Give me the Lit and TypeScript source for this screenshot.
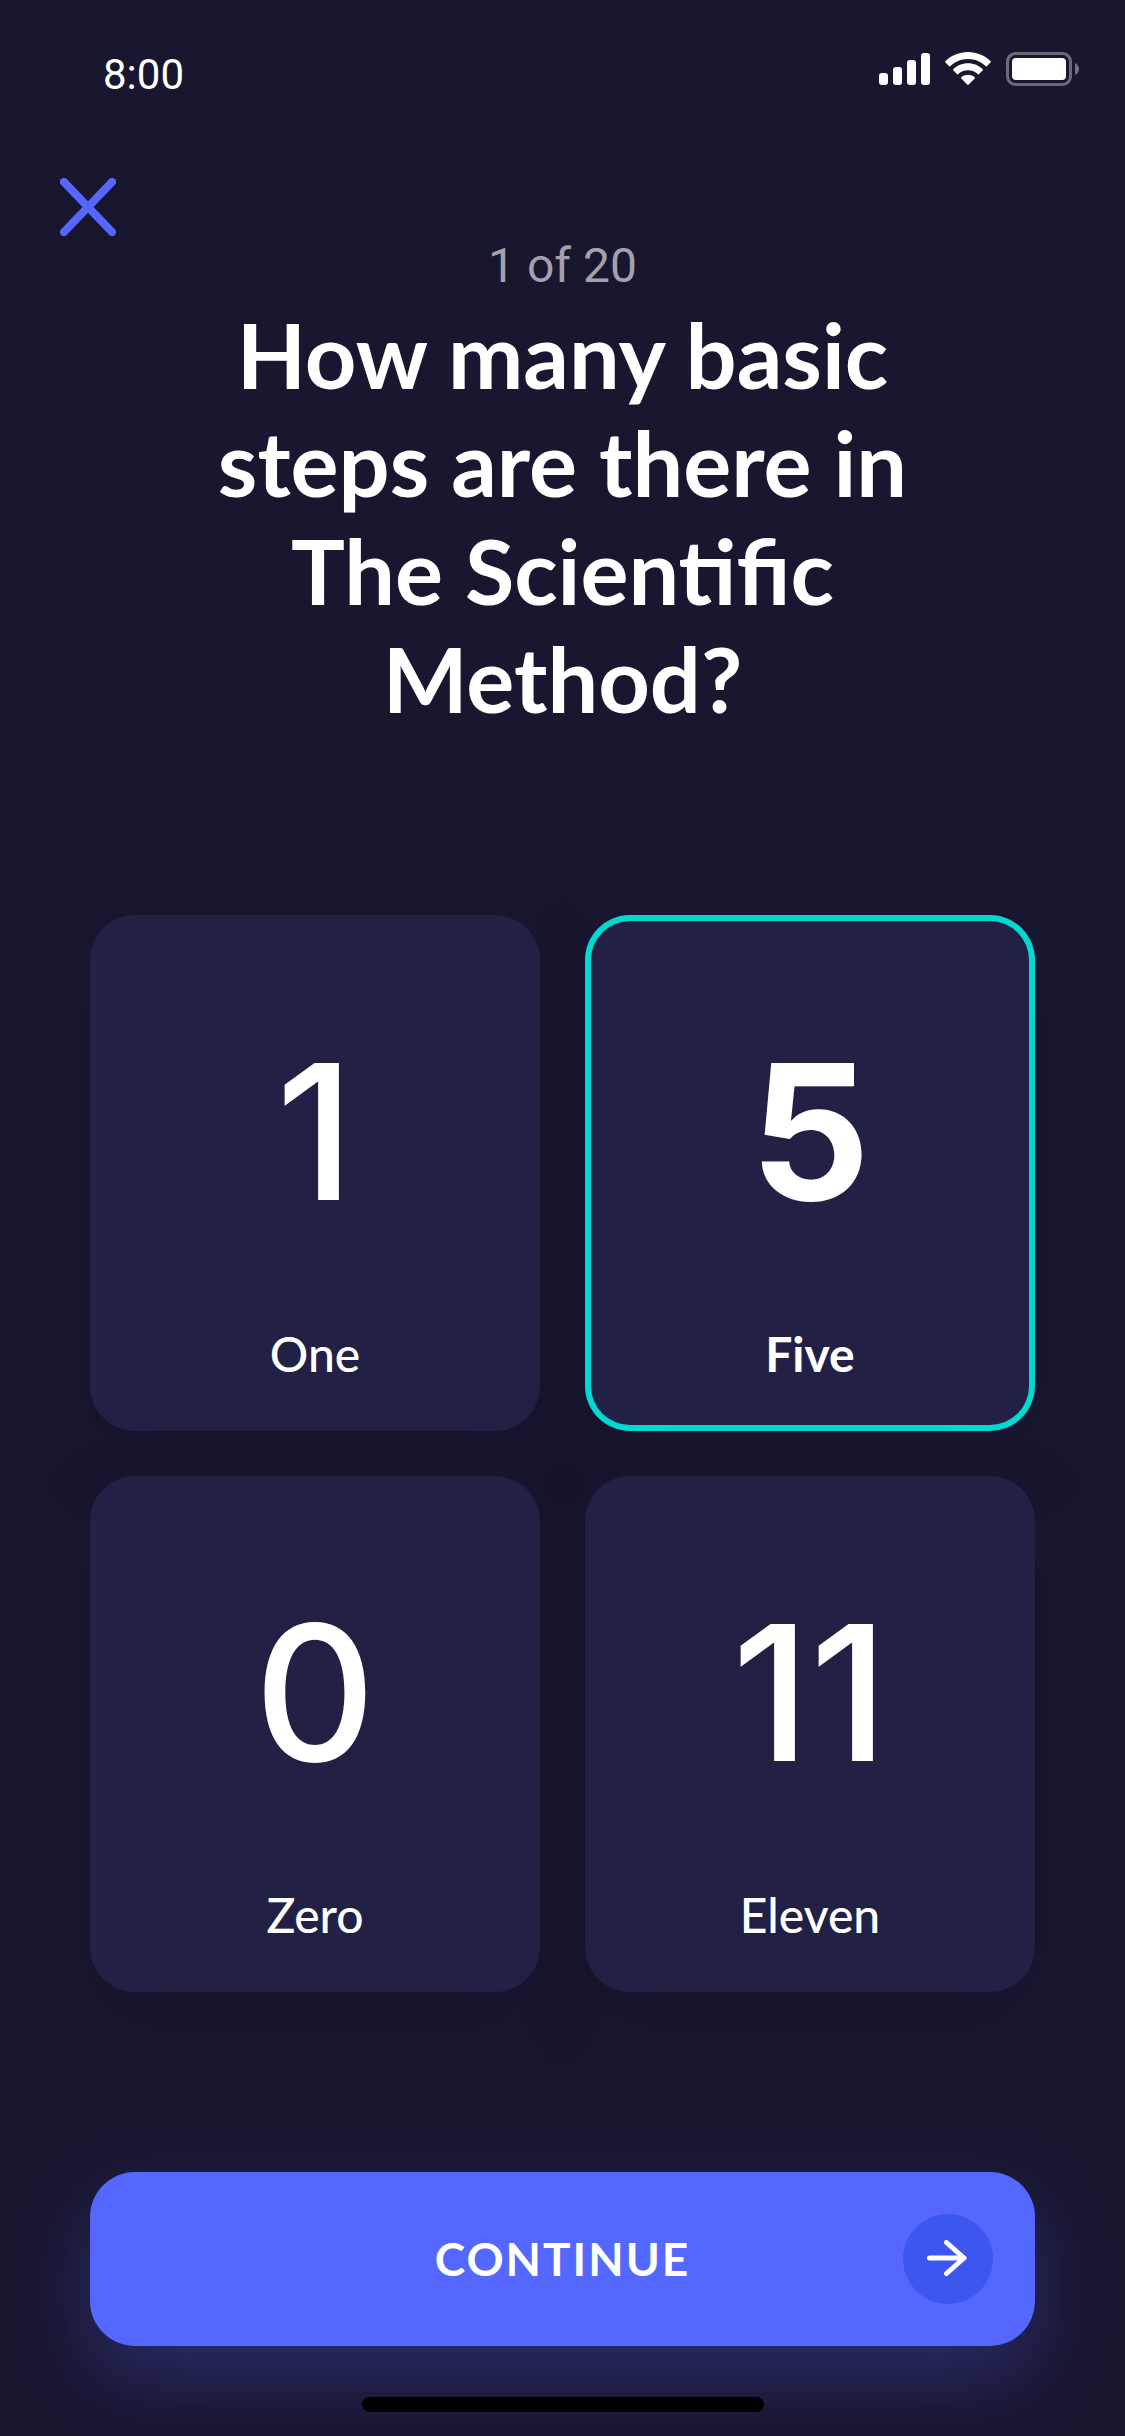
import { LitElement, html, css, svg } from "lit";
import { customElement, state } from "lit/decorators.js";
import { classMap } from "lit/directives/class-map.js";

interface Option {
  figure: string;
  label: string;
}

const OPTIONS: Option[] = [
  { figure: "1", label: "One" },
  { figure: "5", label: "Five" },
  { figure: "0", label: "Zero" },
  { figure: "11", label: "Eleven" },
];

const SIGNAL = [
  { x: 0, y: 20, h: 12 },
  { x: 14, y: 14, h: 18 },
  { x: 28, y: 7, h: 25 },
  { x: 42, y: 0, h: 32 },
];

@customElement("status-bar")
export class StatusBar extends LitElement {
  static styles = css`
    :host {
      display: flex;
      justify-content: space-between;
      align-items: flex-start;
      padding: 45px 46px 0 103px;
    }
    .time {
      font: 400 42px/60px Roboto, sans-serif;
    }
    .icons {
      display: flex;
      gap: 15px;
      padding-top: 7px;
    }
    svg {
      display: block;
    }
  `;

  render() {
    return html`
      <span class="time">8:00</span>
      <div class="icons">
        <svg width="51" height="34" viewBox="0 -1 51 34" fill="#fff" aria-hidden="true">
          ${SIGNAL.map((b) => svg`<rect x=${b.x} y=${b.y} width="9" height=${b.h} rx="3" />`)}
        </svg>
        <svg width="46" height="34" viewBox="0 0 46 34" fill="#fff" aria-hidden="true">
          <path d="M23 0C14.2 0 6.200 3.500 0.300 9.200Q-0.200 9.800 0.300 10.300L4.200 14.300Q4.600 14.600 5.100 14.200C9.800 9.800 16 7 23 7S36.200 9.800 40.900 14.200Q41.400 14.600 41.800 14.300L45.700 10.300Q46.200 9.800 45.700 9.200C39.800 3.500 31.800 0 23 0Z" />
          <path d="M23 11.200C17.200 11.200 12 13.500 8.200 17.200Q7.700 17.700 8.200 18.200L12.100 22.200Q12.500 22.600 13 22.200C15.600 19.700 19.100 18.200 23 18.200S30.400 19.700 33 22.200Q33.500 22.600 33.900 22.200L37.800 18.200Q38.300 17.700 37.800 17.200C34 13.500 28.800 11.200 23 11.200Z" />
          <path d="M23 22.800C20.300 22.800 17.900 23.800 16.100 25.400Q15.700 25.900 16.100 26.300L22.500 32.700Q23 33.100 23.500 32.700L29.900 26.300Q30.300 25.900 29.900 25.400C28.100 23.800 25.700 22.800 23 22.800Z" />
        </svg>
        <svg width="73" height="34" viewBox="0 0 73 34" aria-hidden="true">
          <rect x="1.500" y="1.500" width="63" height="31" rx="8" fill="none" stroke="#fff" stroke-opacity="0.360" stroke-width="3" />
          <rect x="6" y="6" width="54" height="22" rx="4" fill="#fff" />
          <path d="M69 11C71.400 12 73 14.400 73 17S71.400 22 69 23Z" fill="#fff" fill-opacity="0.400" />
        </svg>
      </div>
    `;
  }
}

@customElement("app-root")
export class AppRoot extends LitElement {
  static styles = css`
    :host {
      display: block;
      color: #fff;
      background: #191630;
      font-family: Lato, sans-serif;
    }
    * {
      box-sizing: border-box;
    }
    button {
      border: 0;
      padding: 0;
      color: inherit;
      font: inherit;
      background: none;
      cursor: pointer;
    }
    svg {
      display: block;
    }
    .screen {
      display: flex;
      flex-direction: column;
      min-height: 100vh;
      overflow: hidden;
    }
    .nav {
      display: flex;
      padding: 73px 60px 0;
    }
    .intro {
      padding: 0 195px;
      text-align: center;
    }
    .counter {
      margin: 0 0 4px;
      color: #a3a1ac;
      font: 400 48px/60px Roboto, sans-serif;
    }
    .question {
      margin: 0;
      font-size: 90px;
      line-height: 108px;
      font-weight: 700;
    }
    .options {
      display: grid;
      grid-template-columns: 1fr 1fr;
      gap: 45px;
      padding: 183px 90px 0;
    }
    .card {
      position: relative;
      display: flex;
      flex-direction: column;
      align-items: center;
      gap: 72px;
      padding: 97px 24px 47px;
      border-radius: 45px;
      background: #232046;
      box-shadow: 0 30px 90px rgba(0, 0, 0, 0.100);
      cursor: pointer;
    }
    .selected {
      box-shadow: inset 0 0 0 6px #00d9d0, 0 30px 90px rgba(0, 0, 0, 0.100);
    }
    .radio {
      position: absolute;
      inset: 0;
      width: 100%;
      height: 100%;
      margin: 0;
      opacity: 0;
      cursor: pointer;
    }
    .figure {
      font: 500 188px/240px Inter, sans-serif;
    }
    .label {
      font-size: 48px;
      line-height: 60px;
      font-weight: 500;
    }
    .selected .figure,
    .selected .label {
      font-weight: 700;
    }
    .actions {
      padding: 180px 90px 0;
    }
    .continue {
      display: grid;
      grid-template-columns: 90px 1fr 90px;
      align-items: center;
      width: 100%;
      padding: 42px;
      border-radius: 45px;
      background: #5468ff;
      box-shadow: 0 30px 75px rgba(84, 104, 255, 0.270);
    }
    .caption {
      grid-column: 2;
      font-size: 46px;
      line-height: 60px;
      font-weight: 700;
      letter-spacing: 2px;
    }
    .go {
      display: grid;
      place-items: center;
      height: 90px;
      border-radius: 50%;
      background: #3d56f0;
    }
    .home {
      align-self: center;
      width: 402px;
      height: 15px;
      margin-top: auto;
      margin-bottom: 24px;
      border-radius: 8px;
      background: #000;
      z-index: 1;
    }
  `;

  @state() private selected = "5";

  render() {
    return html`
      <main class="screen">
        <status-bar></status-bar>
        <div class="nav">
          <button type="button" aria-label="Close">
            <svg width="56" height="58" viewBox="0 0 56 58" fill="none" stroke="#5468ff" stroke-width="8" stroke-linecap="round" aria-hidden="true">
              <path d="M4 4L52 54M52 4L4 54" />
            </svg>
          </button>
        </div>
        <header class="intro">
          <p class="counter">1 of 20</p>
          <h1 class="question" id="question">How many basic steps are there in The Scientific Method?</h1>
        </header>
        <div class="options" role="radiogroup" aria-labelledby="question">
          ${OPTIONS.map(
            (o) => html`
              <label class=${classMap({ card: true, selected: o.figure === this.selected })}>
                <input
                  class="radio"
                  type="radio"
                  name="answer"
                  .value=${o.figure}
                  .checked=${o.figure === this.selected}
                  @change=${() => (this.selected = o.figure)}
                />
                <span class="figure">${o.figure}</span>
                <span class="label">${o.label}</span>
              </label>
            `,
          )}
        </div>
        <div class="actions">
          <button class="continue" type="button">
            <span class="caption">CONTINUE</span>
            <span class="go">
              <svg width="42" height="38" viewBox="0 0 42 38" fill="none" stroke="#fff" stroke-width="5" stroke-linecap="round" stroke-linejoin="round" aria-hidden="true">
                <path d="M2.500 18H37M19.500 2.500L37 18L19.500 33.500" />
              </svg>
            </span>
          </button>
        </div>
        <div class="home"></div>
      </main>
    `;
  }
}
